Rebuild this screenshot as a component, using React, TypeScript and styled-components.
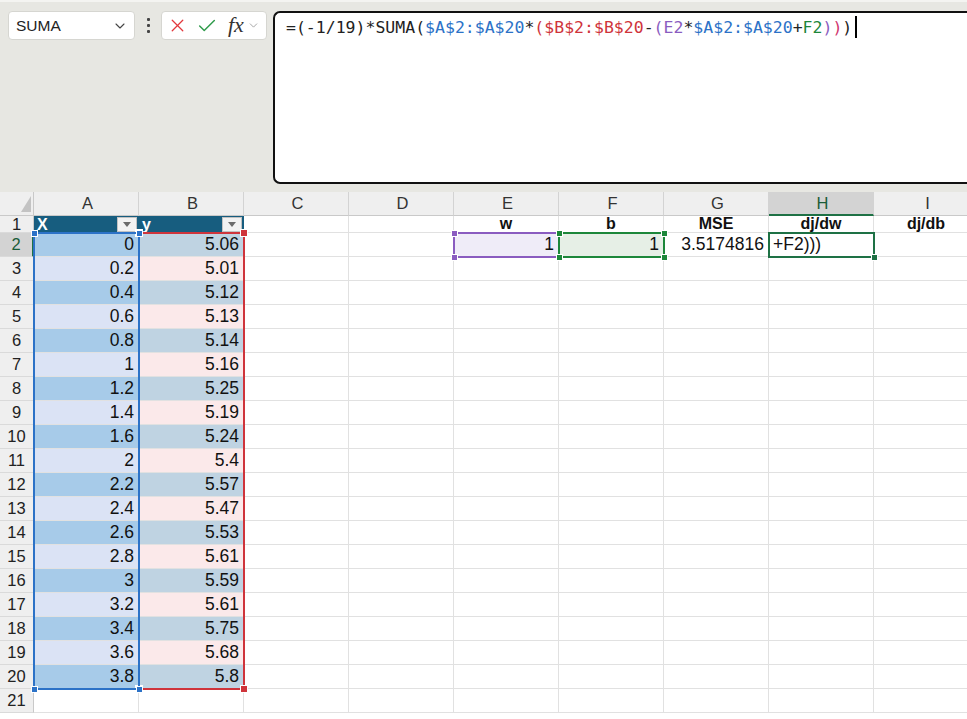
import React from 'react';
import styled, { createGlobalStyle } from 'styled-components';
import { ChevronDown, X, Check } from 'lucide-react';

const GlobalStyle = createGlobalStyle`
  html, body {
    margin: 0;
    padding: 0;
    background: #e7e7e2;
  }
  body {
    font-family: "Liberation Sans", Arial, sans-serif;
  }
`;

const INK = '#222222';
const BLUE = '#2c72c7';
const RED = '#cf343b';
const PURPLE = '#8a5cc0';
const GREEN = '#1d873a';
const ACTIVE = '#1e7145';

const COL_W = 105;
const HEAD_W = 34;
const HEAD_H = 24;
const ROW1_H = 17;
const ROW_H = 24;

const Page = styled.div`
  width: 967px;
  height: 719px;
  overflow: hidden;
  background: #e7e7e2;
  display: flex;
  flex-direction: column;
`;

const TopBar = styled.div`
  height: 192px;
  flex: none;
  box-sizing: border-box;
  display: flex;
  align-items: flex-start;
  padding: 9px 0 0 8px;
  border-top: 2px solid #f4f4f1;
`;

const NameBox = styled.div`
  width: 127px;
  height: 29px;
  box-sizing: border-box;
  background: #fff;
  border: 1px solid #d6d6d1;
  border-radius: 4px;
  display: flex;
  align-items: center;
  justify-content: space-between;
  padding: 0 6px 0 7px;
  font-size: 15.5px;
  color: ${INK};
`;

const Dots = styled.div`
  width: 26px;
  height: 29px;
  display: flex;
  flex-direction: column;
  align-items: center;
  justify-content: center;
  gap: 3px;
`;

const Dot = styled.span`
  width: 3px;
  height: 3px;
  border-radius: 1px;
  background: #444;
`;

const ButtonsBox = styled.div`
  width: 106px;
  height: 29px;
  box-sizing: border-box;
  background: #fff;
  border: 1px solid #d6d6d1;
  border-radius: 4px;
  display: flex;
  align-items: center;
  padding-left: 5px;
  gap: 8px;
`;

const Fx = styled.span`
  font-family: "Liberation Serif", "Times New Roman", serif;
  font-style: italic;
  font-size: 22px;
  color: #333;
  margin-left: 2px;
  margin-top: -2px;
`;

const SmallChevron = styled(ChevronDown)`
  margin-left: -5px;
`;

const FormulaBox = styled.div`
  flex: 1;
  margin-left: 6px;
  height: 173px;
  box-sizing: border-box;
  background: #fff;
  border: 2px solid #111;
  border-right: none;
  border-radius: 7px 0 0 7px;
  padding: 3px 11px;
  font-family: "DejaVu Sans Mono", "Liberation Mono", monospace;
  font-size: 16.5px;
  line-height: 20px;
  white-space: nowrap;
`;

const Token = styled.span<{ $color: string }>`
  color: ${p => p.$color};
`;

const Caret = styled.span`
  display: inline-block;
  width: 1.5px;
  height: 22px;
  background: #000;
  vertical-align: -5px;
  margin-left: 3px;
`;

const Sheet = styled.div`
  position: relative;
  flex: 1;
  background: #fff;
  overflow: hidden;
`;

const Grid = styled.div`
  display: grid;
  grid-template-columns: ${HEAD_W}px repeat(9, ${COL_W}px);
  grid-template-rows: ${HEAD_H}px ${ROW1_H}px repeat(21, ${ROW_H}px);
`;

const Corner = styled.div`
  position: relative;
  background: #efefef;
  border-right: 1px solid #c9c9c9;
  border-bottom: 1px solid #c9c9c9;
  box-sizing: border-box;
  &::after {
    content: '';
    position: absolute;
    right: 2px;
    bottom: 3px;
    border-style: solid;
    border-width: 0 0 16px 10px;
    border-color: transparent transparent #c3c3c3 transparent;
  }
`;

const ColHead = styled.div<{ $active?: boolean }>`
  box-sizing: border-box;
  background: ${p => (p.$active ? '#d3d3d3' : '#efefef')};
  border-right: 1px solid #d3d3d3;
  border-bottom: ${p => (p.$active ? `2px solid ${ACTIVE}` : '1px solid #c9c9c9')};
  display: flex;
  align-items: center;
  justify-content: center;
  padding-left: 3px;
  font-size: 16.5px;
  color: ${p => (p.$active ? '#1a5c38' : '#333')};
`;

const RowHead = styled.div<{ $active?: boolean }>`
  box-sizing: border-box;
  background: ${p => (p.$active ? '#d3d3d3' : '#efefef')};
  border-right: ${p => (p.$active ? `2px solid ${ACTIVE}` : '1px solid #c9c9c9')};
  border-bottom: 1px solid #dadada;
  display: flex;
  align-items: center;
  justify-content: center;
  font-size: 16.5px;
  color: ${p => (p.$active ? '#1a5c38' : '#222')};
`;

const Cell = styled.div<{ $bg?: string; $align?: 'left' | 'right' | 'center'; $bold?: boolean }>`
  box-sizing: border-box;
  background: ${p => p.$bg || '#fff'};
  border-right: 1px solid #e1e1e1;
  border-bottom: 1px solid #e1e1e1;
  display: flex;
  align-items: center;
  justify-content: ${p => (p.$align === 'left' ? 'flex-start' : p.$align === 'center' ? 'center' : 'flex-end')};
  padding: 0 4px;
  font-size: ${p => (p.$bold ? '16px' : '17.5px')};
  font-weight: ${p => (p.$bold ? 700 : 400)};
  color: #111;
  white-space: nowrap;
  overflow: visible;
`;

const TableHead = styled.div`
  box-sizing: border-box;
  background: #175d7f;
  color: #fff;
  font-weight: 700;
  font-size: 16px;
  display: flex;
  align-items: center;
  justify-content: space-between;
  padding: 0 2px 0 3px;
`;

const FilterButton = styled.div`
  width: 20px;
  height: 15px;
  box-sizing: border-box;
  background: #f2f2f2;
  border: 1px solid #c2c2c2;
  display: flex;
  align-items: center;
  justify-content: center;
  &::after {
    content: '';
    border-style: solid;
    border-width: 5px 4px 0 4px;
    border-color: #6b6b6b transparent transparent transparent;
  }
`;

const RangeBox = styled.div<{ $color: string }>`
  position: absolute;
  box-sizing: border-box;
  border: 2px solid ${p => p.$color};
  pointer-events: none;
`;

const Handle = styled.span<{ $color: string; $x: 'left' | 'right'; $y: 'top' | 'bottom'; $size?: number }>`
  position: absolute;
  width: ${p => p.$size || 6}px;
  height: ${p => p.$size || 6}px;
  background: ${p => p.$color};
  border: 1px solid #fff;
  ${p => `${p.$x}: -${(p.$size || 6) / 2 + 2}px;`}
  ${p => `${p.$y}: -${(p.$size || 6) / 2 + 2}px;`}
`;

const xs = ['0', '0.2', '0.4', '0.6', '0.8', '1', '1.2', '1.4', '1.6', '2', '2.2', '2.4', '2.6', '2.8', '3', '3.2', '3.4', '3.6', '3.8'];
const ys = ['5.06', '5.01', '5.12', '5.13', '5.14', '5.16', '5.25', '5.19', '5.24', '5.4', '5.57', '5.47', '5.53', '5.61', '5.59', '5.61', '5.75', '5.68', '5.8'];

const letters = ['A', 'B', 'C', 'D', 'E', 'F', 'G', 'H', 'I'];

const formula: [string, string][] = [
  ['=(-1/19)*SUMA(', INK],
  ['$A$2:$A$20', BLUE],
  ['*', INK],
  ['(', RED],
  ['$B$2:$B$20', RED],
  ['-', INK],
  ['(', PURPLE],
  ['E2', PURPLE],
  ['*', INK],
  ['$A$2:$A$20', BLUE],
  ['+', INK],
  ['F2', GREEN],
  [')', PURPLE],
  [')', '#d0366e'],
  [')', INK],
];

const colLeft = (c: number) => HEAD_W + c * COL_W;
const rowTop = (r: number) => (r === 1 ? HEAD_H : HEAD_H + ROW1_H + (r - 2) * ROW_H);

type Corners = Array<['left' | 'right', 'top' | 'bottom']>;
const allCorners: Corners = [['left', 'top'], ['right', 'top'], ['left', 'bottom'], ['right', 'bottom']];

const Range: React.FC<{ c: number; r1: number; r2: number; color: string; corners?: Corners; size?: number }> = ({
  c,
  r1,
  r2,
  color,
  corners = allCorners,
  size,
}) => (
  <RangeBox
    $color={color}
    style={{
      left: colLeft(c) - 1,
      top: rowTop(r1) - 1,
      width: COL_W + 2,
      height: rowTop(r2) + ROW_H - rowTop(r1) + 2,
    }}
  >
    {corners.map(([x, y]) => (
      <Handle key={x + y} $color={color} $x={x} $y={y} $size={size} />
    ))}
  </RangeBox>
);

const headerLabels: Record<number, string> = { 4: 'w', 5: 'b', 6: 'MSE', 7: 'dj/dw', 8: 'dj/db' };

function renderCell(r: number, c: number) {
  const key = `${r}-${c}`;
  if (r === 1) {
    if (c === 0 || c === 1) {
      return (
        <TableHead key={key}>
          {c === 0 ? 'X' : 'y'}
          <FilterButton />
        </TableHead>
      );
    }
    return (
      <Cell key={key} $align="center" $bold>
        {headerLabels[c] || ''}
      </Cell>
    );
  }
  if (r >= 2 && r <= 20 && c <= 1) {
    const even = r % 2 === 0;
    const bg = c === 0 ? (even ? '#a7cbe9' : '#dbe3f5') : even ? '#bfd3e2' : '#fbe9ea';
    return (
      <Cell key={key} $bg={bg}>
        {c === 0 ? xs[r - 2] : ys[r - 2]}
      </Cell>
    );
  }
  if (r === 2) {
    if (c === 4) return <Cell key={key} $bg="#efecf8">1</Cell>;
    if (c === 5) return <Cell key={key} $bg="#e6efe6">1</Cell>;
    if (c === 6) return <Cell key={key}>3.5174816</Cell>;
    if (c === 7) return <Cell key={key} $align="left">+F2)))</Cell>;
  }
  return <Cell key={key} />;
}

export default function App() {
  const rows = Array.from({ length: 21 }, (_, i) => i + 1);
  return (
    <Page>
      <GlobalStyle />
      <TopBar>
        <NameBox>
          SUMA
          <ChevronDown size={16} color="#444" strokeWidth={1.6} />
        </NameBox>
        <Dots>
          <Dot />
          <Dot />
          <Dot />
        </Dots>
        <ButtonsBox>
          <X size={21} color="#e2383d" strokeWidth={1.5} />
          <Check size={22} color="#2f9b4b" strokeWidth={1.6} />
          <Fx>fx</Fx>
          <SmallChevron size={13} color="#9a9a9a" strokeWidth={1.6} />
        </ButtonsBox>
        <FormulaBox>
          {formula.map(([t, col], i) => (
            <Token key={i} $color={col}>
              {t}
            </Token>
          ))}
          <Caret />
        </FormulaBox>
      </TopBar>
      <Sheet>
        <Grid>
          <Corner />
          {letters.map((l, i) => (
            <ColHead key={l} $active={i === 7}>
              {l}
            </ColHead>
          ))}
          {rows.map(r => (
            <React.Fragment key={r}>
              <RowHead $active={r === 2}>{r}</RowHead>
              {letters.map((_, c) => renderCell(r, c))}
            </React.Fragment>
          ))}
        </Grid>
        <Range c={1} r1={2} r2={20} color={RED} />
        <Range c={0} r1={2} r2={20} color={BLUE} size={5} />
        <Range c={4} r1={2} r2={2} color={PURPLE} size={5} />
        <Range c={5} r1={2} r2={2} color={GREEN} size={5} />
        <Range c={7} r1={2} r2={2} color={ACTIVE} corners={[['right', 'bottom']]} size={5} />
      </Sheet>
    </Page>
  );
}
